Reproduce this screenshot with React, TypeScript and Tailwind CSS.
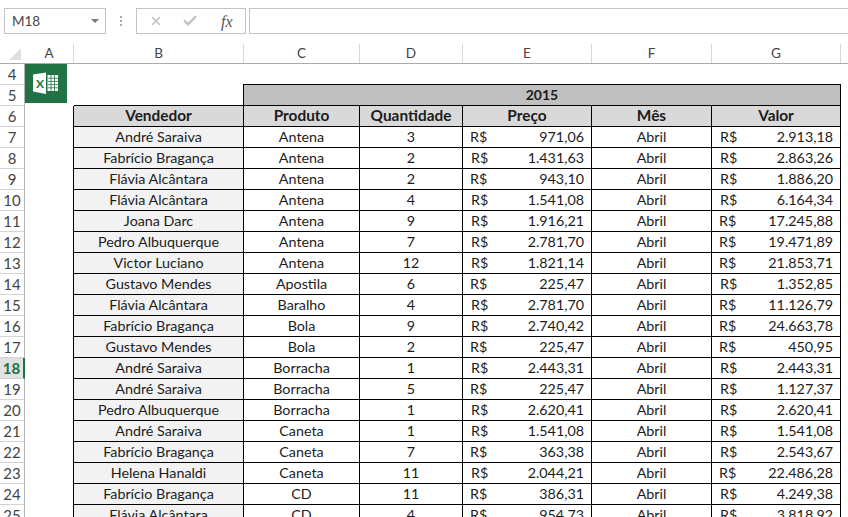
import { X, Check } from 'lucide-react';

type Linha = [string, string, string, string, string];

// linhas 7 a 25 da planilha
const linhas: Linha[] = [
  ['André Saraiva', 'Antena', '3', '971,06', '2.913,18'],
  ['Fabrício Bragança', 'Antena', '2', '1.431,63', '2.863,26'],
  ['Flávia Alcântara', 'Antena', '2', '943,10', '1.886,20'],
  ['Flávia Alcântara', 'Antena', '4', '1.541,08', '6.164,34'],
  ['Joana Darc', 'Antena', '9', '1.916,21', '17.245,88'],
  ['Pedro Albuquerque', 'Antena', '7', '2.781,70', '19.471,89'],
  ['Victor Luciano', 'Antena', '12', '1.821,14', '21.853,71'],
  ['Gustavo Mendes', 'Apostila', '6', '225,47', '1.352,85'],
  ['Flávia Alcântara', 'Baralho', '4', '2.781,70', '11.126,79'],
  ['Fabrício Bragança', 'Bola', '9', '2.740,42', '24.663,78'],
  ['Gustavo Mendes', 'Bola', '2', '225,47', '450,95'],
  ['André Saraiva', 'Borracha', '1', '2.443,31', '2.443,31'],
  ['André Saraiva', 'Borracha', '5', '225,47', '1.127,37'],
  ['Pedro Albuquerque', 'Borracha', '1', '2.620,41', '2.620,41'],
  ['André Saraiva', 'Caneta', '1', '1.541,08', '1.541,08'],
  ['Fabrício Bragança', 'Caneta', '7', '363,38', '2.543,67'],
  ['Helena Hanaldi', 'Caneta', '11', '2.044,21', '22.486,28'],
  ['Fabrício Bragança', 'CD', '11', '386,31', '4.249,38'],
  ['Flávia Alcântara', 'CD', '4', '954,73', '3.818,92'],
];

const colunas = 'grid grid-cols-[49px_170px_116px_103px_129px_120px_129px]';

function LogoExcel() {
  return (
    <svg className="absolute left-[25px] top-0" width="42" height="39" viewBox="0 0 42 39">
      <rect width="42" height="39" fill="#217346" />
      <polygon points="8,10.5 21,8.5 21,30 8,27.5" fill="#fff" />
      <text x="11" y="24" fontSize="12" fontWeight="700" fontFamily="Lato, sans-serif" fill="#217346">X</text>
      <rect x="22.5" y="11" width="10.5" height="16" fill="#fff" />
      <g stroke="#217346" strokeWidth="0.8">
        <path d="M26 11v16M29.5 11v16M22.5 14.2h10.5M22.5 17.4h10.5M22.5 20.6h10.5M22.5 23.8h10.5" />
      </g>
    </svg>
  );
}

function CabecalhoLinha({ n }: { n: number }) {
  const ativa = n === 18;
  return (
    <div
      className={
        ativa
          ? 'w-[25px] shrink-0 h-full flex items-center justify-center border-b border-b-[#d4d4d4] border-r-2 border-r-[#217346] bg-[#e1e1e1] text-[#217346] font-bold text-[15px]'
          : 'w-[25px] shrink-0 h-full flex items-center justify-center border-b border-b-[#d4d4d4] border-r border-r-[#b4b4b4] text-[#444] text-[15px]'
      }
    >
      {n}
    </div>
  );
}

function Celula({ children, className = '' }: { children?: React.ReactNode; className?: string }) {
  return (
    <div className={`flex items-center justify-center pb-[2px] border-b border-r border-black ${className}`}>{children}</div>
  );
}

function Moeda({ valor, recuo }: { valor: string; recuo: boolean }) {
  return (
    <div className={`flex items-center justify-between pb-[2px] border-b border-r border-black pr-[7px] ${recuo ? 'pl-[8px]' : 'pl-[7px]'}`}>
      <span>R$</span>
      <span>{valor}</span>
    </div>
  );
}

export default function App() {
  return (
    <div className="relative w-[848px] h-[517px] overflow-hidden bg-white font-['Lato',sans-serif] text-[14.3px] leading-[17px] text-[#1c1c1c]">
      {/* barra de fórmulas */}
      <div className="h-[44px] pt-2 flex items-start">
        <div className="ml-1 w-[102px] h-[26px] border border-[#c4c4c4] flex items-center justify-between pl-[7px] pr-[5px] text-[13.5px] text-[#444]">
          <span>M18</span>
          <span className="w-0 h-0 border-x-[4px] border-x-transparent border-t-[4px] border-t-[#777] mr-[1px]" />
        </div>
        <div className="ml-[14px] mr-[14px] mt-2 flex flex-col gap-[2px]">
          <span className="w-[2px] h-[2px] bg-[#aaa]" />
          <span className="w-[2px] h-[2px] bg-[#aaa]" />
          <span className="w-[2px] h-[2px] bg-[#aaa]" />
        </div>
        <div className="w-[110px] h-[26px] border border-[#c4c4c4] flex items-center">
          <X className="ml-[12px] text-[#c0c0c0]" size={14} strokeWidth={2.5} />
          <Check className="ml-[19px] text-[#c0c0c0]" size={16} strokeWidth={3.5} />
          <span className="ml-[23px] font-['Liberation_Serif',serif] italic text-[16px] text-[#555]">fx</span>
        </div>
        <div className="ml-[3px] flex-1 h-[26px] border border-r-0 border-[#c4c4c4]" />
      </div>

      {/* cabeçalho das colunas */}
      <div className="h-[20px] flex border-b border-[#ababab] text-[13.5px] text-[#444]">
        <div className="w-[25px] shrink-0 pl-[9px] pt-1">
          <svg width="12" height="12" viewBox="0 0 12 12">
            <polygon points="12,0 12,12 0,12" fill="#dfdfdf" />
          </svg>
        </div>
        <div className={colunas}>
          {['A', 'B', 'C', 'D', 'E', 'F', 'G'].map((c) => (
            <div key={c} className="flex items-center justify-center border-r border-[#d8d8d8]">{c}</div>
          ))}
        </div>
      </div>

      {/* planilha */}
      <div className="relative">
        <LogoExcel />

        <div className="h-[21px] flex">
          <CabecalhoLinha n={4} />
        </div>

        <div className="h-[21px] flex">
          <CabecalhoLinha n={5} />
          <div className="w-[218px] shrink-0" />
          <div className="w-[598px] -mt-px h-[22px] pb-[2px] border border-black bg-[#bfbfbf] flex items-center justify-center font-bold text-[14px]">
            2015
          </div>
        </div>

        <div className="h-[21px] flex">
          <CabecalhoLinha n={6} />
          <div className={`${colunas} h-[22px] font-bold text-[15.4px] -mt-px`}>
            <div className="border-r border-black mt-px" />
            {['Vendedor', 'Produto', 'Quantidade', 'Preço', 'Mês', 'Valor'].map((t) => (
              <Celula key={t} className="bg-[#d9d9d9] border-t">{t}</Celula>
            ))}
          </div>
        </div>

        {linhas.map((l, i) => (
          <div key={i} className="h-[21px] flex">
            <CabecalhoLinha n={i + 7} />
            <div className={`${colunas} h-[21px]`}>
              <div className="border-r border-black" />
              <Celula className="bg-[#f2f2f2]">{l[0]}</Celula>
              <Celula>{l[1]}</Celula>
              <Celula>{l[2]}</Celula>
              <Moeda valor={l[3]} recuo={l[3].length > 6} />
              <Celula>Abril</Celula>
              <Moeda valor={l[4]} recuo={l[4].length === 8} />
            </div>
          </div>
        ))}
      </div>
    </div>
  );
}
